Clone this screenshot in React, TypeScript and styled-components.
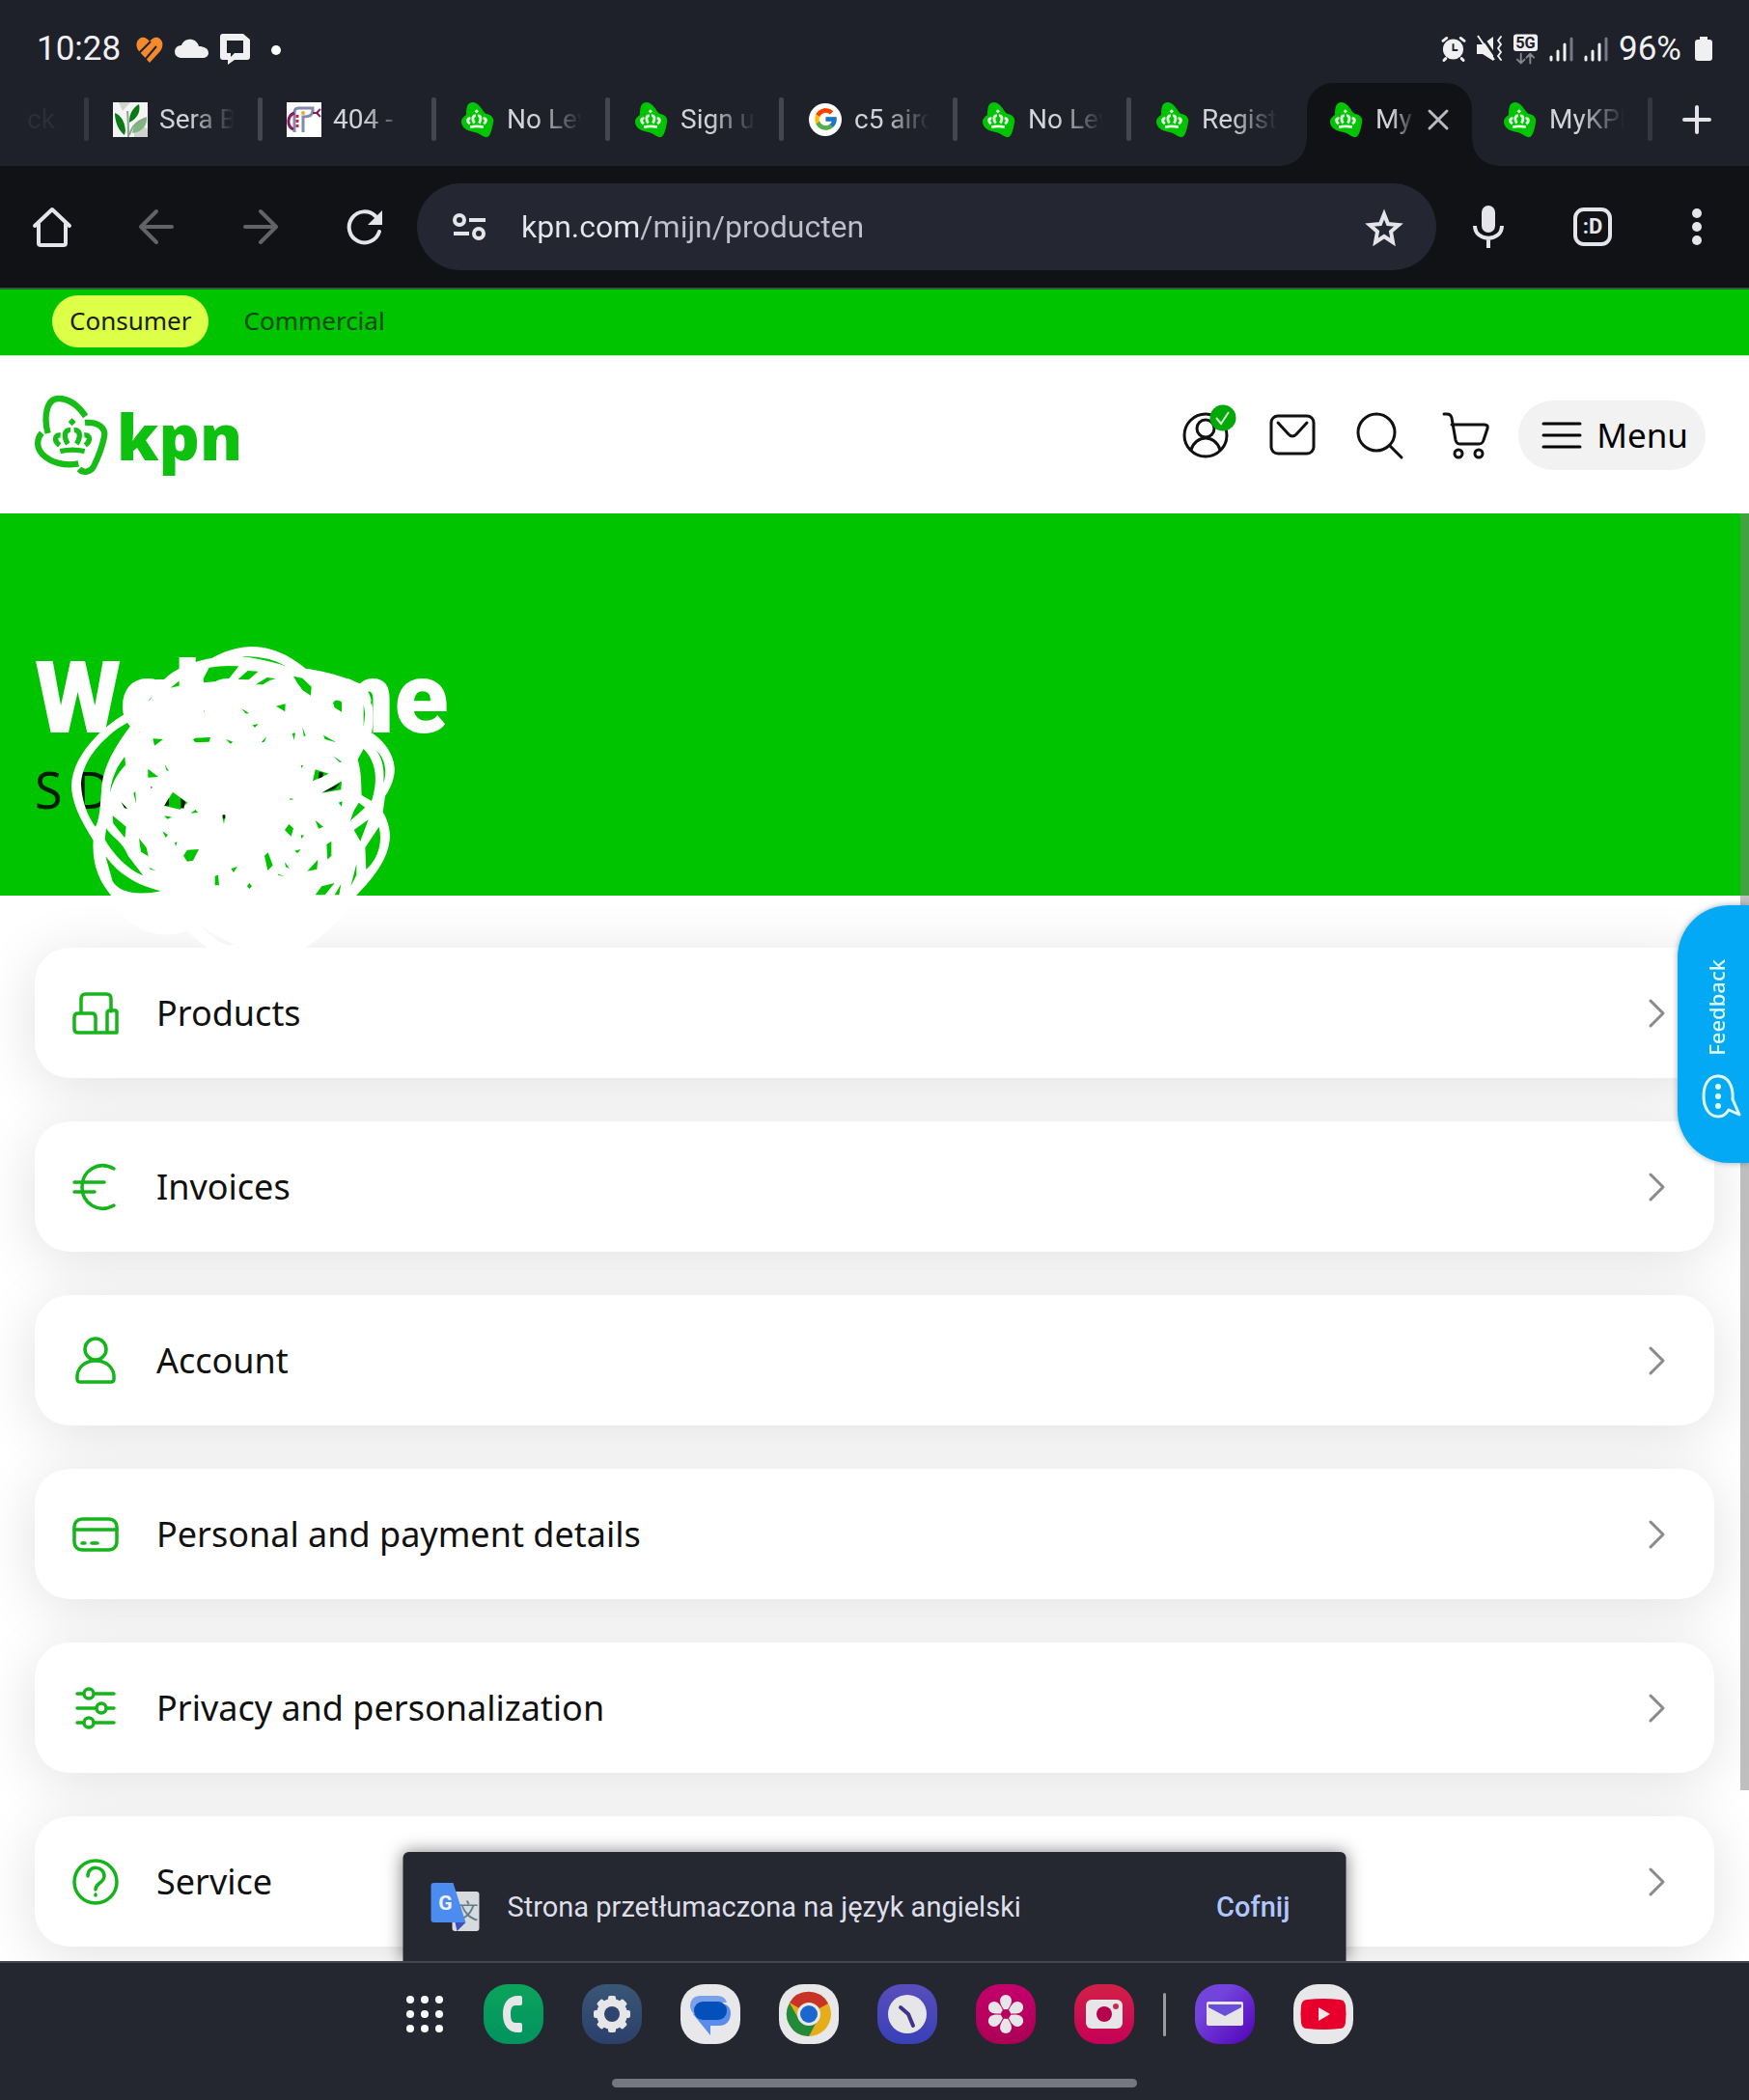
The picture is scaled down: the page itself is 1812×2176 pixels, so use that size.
import React from "react";
import styled, { createGlobalStyle, css } from "styled-components";
import { FcGoogle } from "react-icons/fc";

const GREEN = "#00c400";
const ICON_GREEN = "#14b41a";
const UI_FONT = `Roboto, "Noto Sans", sans-serif`;
const SITE_FONT = `"Noto Sans", "Open Sans", sans-serif`;

const GlobalStyle = createGlobalStyle`
  *, *::before, *::after { box-sizing: border-box; }
  body { margin: 0; background: #fff; }
  button, input { font: inherit; }
`;

const resetButton = css`
  border: 0;
  padding: 0;
  margin: 0;
  background: none;
  color: inherit;
  cursor: pointer;
  display: flex;
  align-items: center;
  justify-content: center;
`;

/* ---------- shell ---------- */

const Screen = styled.div`
  display: flex;
  flex-direction: column;
  height: 100vh;
  overflow: hidden;
  font-family: ${UI_FONT};
`;

const Icon = styled.svg<{ $w: number; $h?: number }>`
  display: block;
  flex: none;
  width: ${(p) => p.$w}px;
  height: ${(p) => p.$h ?? p.$w}px;
  overflow: visible;
`;

const StatusBar = styled.div`
  flex: none;
  height: 86px;
  padding: 15px 38px 0 38px;
  display: flex;
  align-items: center;
  justify-content: space-between;
  background: #1e202a;
  color: #f0f0f2;
  font-size: 35px;
  line-height: 40px;
`;

const StatusGroup = styled.div<{ $gap: number }>`
  display: flex;
  align-items: center;
  gap: ${(p) => p.$gap}px;
`;

const Clock = styled.span`
  margin-right: 4px;
`;

const Battery = styled.span`
  min-width: 97px;
  display: flex;
  align-items: center;
  justify-content: space-between;
  gap: 4px;
`;

/* ---------- tabs ---------- */

const TabStrip = styled.div`
  flex: none;
  height: 86px;
  display: flex;
  background: #1e202a;
  color: #d2d3da;
  font-size: 28px;
  line-height: 36px;
`;

const Divider = styled.span<{ $hidden?: boolean; $dim?: boolean }>`
  flex: none;
  width: 5px;
  height: 45px;
  border-radius: 2px;
  background: ${(p) => (p.$hidden ? "transparent" : p.$dim ? "#343640" : "#44464f")};
`;

const TabItem = styled.div`
  position: relative;
  flex: 0 1 180px;
  min-width: 0;
  padding-bottom: 11px;
  display: flex;
  align-items: center;
`;

const TabShape = styled.span`
  position: absolute;
  inset: 0 2px 0 7px;
  background: #111216;
  border-radius: 27px 27px 0 0;
  &::before,
  &::after {
    content: "";
    position: absolute;
    bottom: 0;
    width: 27px;
    height: 27px;
  }
  &::before {
    right: 100%;
    background: radial-gradient(circle at 0 0, transparent 26px, #111216 27px);
  }
  &::after {
    left: 100%;
    background: radial-gradient(circle at 100% 0, transparent 26px, #111216 27px);
  }
`;

const TabButton = styled.button`
  ${resetButton}
  position: relative;
  flex: 1;
  min-width: 0;
  justify-content: flex-start;
  gap: 12px;
  padding-left: 25px;
`;

const TabTitle = styled.span<{ $fade: number }>`
  flex: none;
  white-space: nowrap;
  text-align: left;
  mask-image: linear-gradient(90deg, #000 ${(p) => Math.round(p.$fade * 0.4)}px, transparent ${(p) => p.$fade}px);
`;

const ClippedTab = styled.span`
  flex: 0 0 87px;
  padding: 20px 0 0 28px;
  color: #2c2e38;
`;

const CloseButton = styled.button`
  ${resetButton}
  position: relative;
  flex: none;
  width: 48px;
  height: 48px;
  margin-right: 13px;
`;

const TabEnd = styled.div`
  display: flex;
  align-items: center;
  padding-bottom: 11px;
`;

const NewTab = styled.button`
  ${resetButton}
  width: 92px;
  height: 60px;
  color: #e3e3e8;
`;

/* ---------- toolbar ---------- */

const Toolbar = styled.div`
  flex: none;
  height: 128px;
  display: flex;
  align-items: center;
  background: #111216;
  border-bottom: 2px solid #2b5a33;
  color: #e4e4ea;
`;

const ToolButton = styled.button<{ $muted?: boolean }>`
  ${resetButton}
  flex: none;
  width: 108px;
  height: 90px;
  color: ${(p) => (p.$muted ? "#626367" : "#e4e4ea")};
`;

const AddressBar = styled.form`
  flex: 1;
  min-width: 0;
  height: 90px;
  display: flex;
  align-items: center;
  padding-left: 37px;
  border-radius: 45px;
  background: #242731;
`;

const AddressInput = styled.input`
  flex: 1;
  min-width: 0;
  height: 60px;
  margin-left: 36px;
  padding: 0;
  border: 0;
  outline: 0;
  font-size: 32px;
  color: transparent;
  background-image: linear-gradient(90deg, #e6e6ee 0 122px, #bfc0cb 122px);
  background-clip: text;
`;

const TabCount = styled.span`
  width: 40px;
  height: 40px;
  display: flex;
  align-items: center;
  justify-content: center;
  border: 4px solid currentColor;
  border-radius: 11px;
  font-size: 22px;
  line-height: 24px;
  font-weight: 700;
`;

const ToolGroup = styled.div`
  flex: none;
  display: flex;
`;

/* ---------- page ---------- */

const Viewport = styled.main`
  position: relative;
  flex: 1;
  min-height: 0;
  overflow: hidden;
  background: #fff;
  font-family: ${SITE_FONT};
  color: #111;
`;

const AudienceBar = styled.nav`
  height: 69px;
  padding: 6px 54px 0;
  display: flex;
  align-items: flex-start;
  gap: 18px;
  background: ${GREEN};
  border-bottom: 1px solid #b9efb9;
`;

const AudienceLink = styled.a<{ $active?: boolean }>`
  height: 54px;
  padding: 0 18px;
  border-radius: 27px;
  background: ${(p) => (p.$active ? "#deff47" : "transparent")};
  color: ${(p) => (p.$active ? "#161e06" : "#054a05")};
  font-size: 26px;
  line-height: 52px;
  text-decoration: none;
`;

const SiteHeader = styled.header`
  height: 163px;
  padding: 0 45px 0 36px;
  display: flex;
  align-items: center;
  justify-content: space-between;
`;

const Brand = styled.a`
  display: flex;
  align-items: center;
  gap: 9px;
  color: #0fc10f;
  font-size: 66px;
  line-height: 68px;
  font-weight: 900;
  text-decoration: none;
`;

const HeaderActions = styled.div`
  display: flex;
  align-items: center;
  gap: 42px;
`;

const HeaderButton = styled.button`
  ${resetButton}
  width: 48px;
  height: 48px;
  color: #111;
`;

const MenuButton = styled.button`
  ${resetButton}
  height: 72px;
  margin-left: -12px;
  padding: 0 18px 0 24px;
  gap: 15px;
  border-radius: 36px;
  background: #f2f2f2;
  color: #000;
  font-size: 35px;
  line-height: 48px;
`;

const Hero = styled.section`
  position: relative;
  height: 396px;
  padding: 128px 36px 0;
  background: ${GREEN};
`;

const Title = styled.h1`
  margin: 0;
  color: #fff;
  font-family: ${UI_FONT};
  font-size: 103px;
  line-height: 128px;
  font-weight: 900;
`;

const Subtitle = styled.p`
  margin: 0;
  color: #001c00;
  font-size: 52px;
  line-height: 60px;
`;

const ScribbleArt = styled.svg`
  position: absolute;
  left: 0;
  top: 108px;
  width: 500px;
  height: 380px;
  z-index: 2;
  pointer-events: none;
`;

const CardList = styled.ul`
  list-style: none;
  margin: 0;
  padding: 54px 36px 45px;
  display: flex;
  flex-direction: column;
  gap: 45px;
`;

const CardLink = styled.a`
  height: 135px;
  padding: 0 52px 0 39px;
  display: flex;
  align-items: center;
  gap: 39px;
  border-radius: 36px;
  background: #fff;
  box-shadow: 0 9px 60px rgba(0, 0, 0, 0.12);
  color: #111;
  font-size: 36px;
  line-height: 48px;
  text-decoration: none;
`;

const CardLabel = styled.span`
  flex: 1;
`;

const ScrollThumb = styled.div`
  position: absolute;
  top: 232px;
  right: 0;
  width: 9px;
  height: 1323px;
  background: rgba(128, 128, 128, 0.5);
`;

const Feedback = styled.button`
  ${resetButton}
  position: absolute;
  top: 638px;
  right: 0;
  width: 74px;
  height: 267px;
  padding: 10px 0 0 25px;
  flex-direction: column;
  align-items: flex-start;
  gap: 20px;
  border-radius: 54px 0 0 54px;
  background: #04a9f5;
  box-shadow: 0 0 6px rgba(0, 60, 90, 0.4);
  color: #e2fbff;
  font-size: 22px;
  line-height: 30px;
  font-weight: 500;
  z-index: 3;
`;

const FeedbackText = styled.span`
  writing-mode: vertical-rl;
  rotate: 180deg;
`;

const Toast = styled.div`
  position: absolute;
  left: 50%;
  bottom: 0;
  translate: -50% 0;
  width: 977px;
  max-width: 100%;
  height: 113px;
  padding: 0 58px 0 29px;
  display: flex;
  align-items: center;
  border-radius: 6px 6px 0 0;
  background: #252731;
  box-shadow: 0 0 18px rgba(0, 0, 0, 0.5);
  color: #dedfe8;
  font-family: ${UI_FONT};
  font-size: 29px;
  line-height: 36px;
  z-index: 4;
`;

const ToastText = styled.span`
  flex: 1;
  margin-left: 29px;
`;

const ToastAction = styled.button`
  ${resetButton}
  color: #b0c6ff;
  font-weight: 500;
`;

/* ---------- dock ---------- */

const Dock = styled.footer`
  flex: none;
  height: 144px;
  padding-top: 22px;
  display: flex;
  flex-direction: column;
  align-items: center;
  gap: 36px;
  background: #242630;
  border-top: 2px solid #44464f;
`;

const DockRow = styled.div`
  display: flex;
  align-items: center;
  gap: 40px;
`;

const AppsButton = styled.button`
  ${resetButton}
  width: 50px;
  height: 62px;
  padding-left: 8px;
`;

const AppButton = styled.button<{ $bg: string }>`
  ${resetButton}
  width: 62px;
  height: 62px;
  border-radius: 25px;
  background: ${(p) => p.$bg};
`;

const DockDivider = styled.span`
  width: 3px;
  height: 45px;
  margin: 0 -10px;
  border-radius: 2px;
  background: #9a9ba3;
`;

const HomeHandle = styled.div`
  width: 30%;
  height: 9px;
  border-radius: 5px;
  background: #74777f;
`;

/* ---------- drawings ---------- */

const Crown = ({ color }: { color: string }) => (
  <g fill="none" stroke={color} strokeWidth="16">
    <path d="M224 430l12 12-12 12-12-12z" fill={color} stroke="none" />
    <path d="M219 467c-20-2-22 22-8 43" />
    <path d="M230 467c20-2 22 22 8 43" />
    <path d="M188 483c-20-2-20 18-3 31" />
    <path d="M262 483c20-2 20 18 3 31" />
    <path d="M187 533q38-9 76 0" />
  </g>
);

const KpnMark = () => (
  <Icon $w={76} $h={82} viewBox="108 360 228 246" aria-hidden="true">
    <g fill="none" stroke="#16bd16" strokeWidth="19">
      <path d="M149 477c-14-50-5-108 33-108 34 0 64 26 84 55" />
      <path d="M264 444c42-4 66 18 60 44-8 40-20 66-33 92-8 18-32 22-45 8" />
      <path d="M130 476c-18 20-16 48 2 66 26 26 68 38 112 29" />
    </g>
    <Crown color="#16bd16" />
  </Icon>
);

const KpnFavicon = () => (
  <Icon $w={36} viewBox="0 0 36 36">
    <path
      fill="#00c400"
      d="M7 4C9-1 15-1 19 3c4 4 5 8 8 9 6 1 8 5 7 9-1 6-3 14-6 15-4 1-8-4-13-5C8 30 1 27 1 20c0-4 4-6 5-7 0-3 0-6 1-9z"
    />
    <g transform="translate(-23.5 -70.2) scale(.18)">
      <Crown color="#e8ffe8" />
    </g>
  </Icon>
);

const LeafFavicon = () => (
  <Icon $w={36} viewBox="0 0 36 36">
    <path fill="#f4f4f4" d="M0 0h36v36H0z" />
    <path fill="#cfd3cf" d="M6 0h12l-8 9zM22 30l8-6 6 4v8H22z" />
    <path fill="#0b7a16" d="M2 11c7 3 10 9 11 18l-1 5C6 29 2 21 2 11zM27 2c2 8-2 15-10 19 0-9 3-15 10-19z" />
    <path fill="#7fb87f" d="M35 15c1 9-5 16-15 17 1-8 6-14 15-17z" />
    <path fill="none" stroke="#8aa68a" strokeWidth="2" d="M16 36c0-12 0-18-1-27M17 34c3-10 8-14 16-17" />
  </Icon>
);

const PipeFavicon = () => (
  <Icon $w={36} viewBox="0 0 36 36">
    <path fill="#fff" d="M0 0h36v36H0z" />
    <path fill="none" stroke="#7d8cab" strokeWidth="3" d="M8 31V11q0-5 4-5h15v3q0 6-10 6v16" />
    <path fill="none" stroke="#8b1a5c" strokeWidth="3" d="M8 11C0 14 0 25 7 28" />
    <path fill="none" stroke="#8b1a5c" strokeWidth="2" d="M27 11h6M35 7l-4 4 4 4" />
    <path stroke="#d3204f" strokeWidth="3" strokeDasharray="3 2" d="M11 13v13" />
    <circle cx="17" cy="11" r="2" fill="#f5a623" />
  </Icon>
);

const GoogleDisc = styled.span`
  flex: none;
  width: 34px;
  height: 34px;
  margin: 1px;
  display: flex;
  align-items: center;
  justify-content: center;
  border-radius: 50%;
  background: #fff;
`;

const GoogleFavicon = () => (
  <GoogleDisc>
    <FcGoogle size={27} />
  </GoogleDisc>
);

const Signal = () => (
  <Icon $w={25} $h={26} viewBox="0 0 25 26">
    <path stroke="#f0f0f2" strokeWidth="3" strokeLinecap="round" d="M2 21v3M9 15v9M16 8v16" />
    <path stroke="#777983" strokeWidth="3" strokeLinecap="round" d="M23 2v22" />
  </Icon>
);

const line = (width = 3) => ({
  fill: "none",
  stroke: "currentColor",
  strokeWidth: width,
  strokeLinecap: "round" as const,
  strokeLinejoin: "round" as const,
});

const Chevron = () => (
  <Icon $w={16} $h={30} viewBox="0 0 16 30" color="#8a8a8a">
    <path {...line(3)} d="M2 2l13 13L2 28" />
  </Icon>
);

const Scribble = () => (
  <ScribbleArt viewBox="0 0 1500 1140" aria-hidden="true">
    <mask id="scribble-mask" maskUnits="userSpaceOnUse" x="0" y="0" width="1500" height="1140">
      <path
        fill="#fff"
        d="M400 292C300 350 222 440 222 525c3 65 43 125 68 167-5 78 20 128 55 171 25 47 65 122 175 122 28 0 45-6 62-12 20 20 38 38 60 52h308c100-65 140-135 158-162 62-63 104-123 104-188-2-35-17-65-22-70l7-50c23-35 31-65 29-90-4-45-36-85-71-107 5-18 15-108-25-148-40-20-120-45-180-52-70-58-130-68-170-68-60 2-100 25-120 35-60 10-120 35-150 67-70-2-115 28-115 98z"
      />
      <g fill="#000">
        <path d="M405 322C330 360 253 440 252 520c3 60 28 110 45 130 15-30 15-80 18-110 3-70 35-130 95-210z" />
        <path d="M330 655c20 30 50 40 68 85l47 62c-55-22-95-72-119-112zM350 615l42 35-4 35-36-45z" />
        <path d="M388 432l2 26c-25 27-40 52-48 87 3-45 23-85 46-113zM328 742c42 55 92 88 172 108-70 15-130 5-150-30z" />
        <path d="M632 190l18-35q45-8 92-4l-37 47q-40 0-72 4zM740 192l30-27 33 2-30 26zM795 208l35-22 28 4-33 18zM750 120q80-3 142 32-60-20-142-32z" />
        <path d="M912 182l28 6 28 27-2 27-31-20zM530 218l35-28 1 20zM633 288l15-6 2 28 14 24-24-22zM750 282l25 16-10 2zM858 275l29-7-1 24zM475 376l32 2-27 20z" />
        <path d="M606 374l48-2-4 14-42 2-8-8zM702 378l22 8-8 6zM785 334l18-4-11 12zM812 388l16-18-6 16zM908 360l10-2-4 22zM1035 265q8-15 27-3v31l-22-13zM1005 365l40 23-35-10zM1035 430l27 18-6 2zM940 340l10 28-6 0z" />
        <path d="M1130 408l-18 32c13 50 10 80 12 112l31 18c20-60 17-120-25-162zM1168 410c32 30 35 70 24 105 3-45-2-75-24-105zM1115 575l20 15-47 42 12-32zM1100 660l45-32-25 67z" />
        <path d="M1178 650c12 50-3 100-40 133l-3-68zM1130 270l5 30-5 40zM1150 250l8 22-5-4zM1015 705l15-10v45l-12 12zM955 788l33-36-3 30zM885 660l13-18 14 13-7 25zM980 630l25 20-15 6z" />
        <path d="M822 740l11-10 15 40-16 16zM885 760l15 20-12-5zM915 725l20-5-10 12zM570 740l12-18 36-2-18 35-18 3zM432 686l23 29 6 27-23-14zM505 664l17 11-7 9zM592 608l16-11 7 9zM510 616l25 4-15 6z" />
        <path d="M460 470l32 25-32 2zM512 456l13 22-8-4zM537 542l46 33-23 21-50-11zM980 472l42 13-50 23zM1062 508l-2 27-60 10zM668 803l10-3 3 32h-13zM718 780l20-6-12 18zM768 835l7-10 8 10-8 8z" />
        <path d="M980 862l20-27 40-10-30 37zM1040 862l20-34-6 34zM1090 835l18-70v35zM690 615h10l-4 27zM460 260l14-18-8 14zM415 545l6-4 2 38zM375 572l22 22-8-2zM935 460l8-2-6 10zM900 562l14 2-12 3zM1052 575l12-4-2 16zM935 675l10 2-8 10zM862 796l22 8-18-3zM462 776l22 10-16-3zM543 700l8-3-5 14zM430 350l8-3-5 10zM612 945q52 46 116 70l-20 4q-60-24-96-74z" />
      </g>
    </mask>
    <rect width="1500" height="1140" fill="#fff" mask="url(#scribble-mask)" />
    <path
      fill="#001c00"
      d="M525 560v24l-14 1zM562 562l14 10-5 21-9-2zM992 480l13 2-2 13-13 5zM1002 543l56-30-18 20zM692 613h8v12h-6zM377 574l18 19-8-1zM468 526l6 1-4 4z"
    />
  </ScribbleArt>
);

/* ---------- data ---------- */

type TabInfo = { title: string; icon: React.ReactNode; active?: boolean; noDivider?: boolean };

const tabs: TabInfo[] = [
  { title: "Sera B", icon: <LeafFavicon /> },
  { title: "404 -", icon: <PipeFavicon /> },
  { title: "No Lev", icon: <KpnFavicon /> },
  { title: "Sign up", icon: <KpnFavicon /> },
  { title: "c5 airc", icon: <GoogleFavicon /> },
  { title: "No Lev", icon: <KpnFavicon /> },
  { title: "Regist", icon: <KpnFavicon /> },
  { title: "My", icon: <KpnFavicon />, active: true, noDivider: true },
  { title: "MyKPN", icon: <KpnFavicon />, noDivider: true },
];

const cards: { label: string; art: React.ReactNode }[] = [
  {
    label: "Products",
    art: <path d="M9 22V9q0-5 5-5h21q5 0 5 5v13M2 28q0-4 4-4h14q4 0 4 4v16H6q-4 0-4-4zM24 44h22V23q0-2-2-2h-5q-3 0-3 3v20" />,
  },
  {
    label: "Invoices",
    art: <path d="M43 5C27-4 10 7 10 24s17 28 33 19M2 19h31M2 29h21" />,
  },
  {
    label: "Account",
    art: (
      <>
        <circle cx="24" cy="12" r="11" />
        <path d="M5 43c-1-11 7-19 19-19s20 8 19 19q0 3-3 3H8q-3 0-3-3z" />
      </>
    ),
  },
  {
    label: "Personal and payment details",
    art: (
      <>
        <rect x="2" y="8" width="44" height="32" rx="8" />
        <path d="M2 19h44M10 33h3M20 33h6" />
      </>
    ),
  },
  {
    label: "Privacy and personalization",
    art: (
      <>
        <path d="M5 9h6M23 9h20M5 24h19M36 24h7M5 39h6M23 39h20" />
        <circle cx="17" cy="9" r="5" />
        <circle cx="30" cy="24" r="5" />
        <circle cx="17" cy="39" r="5" />
      </>
    ),
  },
  {
    label: "Service",
    art: (
      <>
        <circle cx="24" cy="24" r="22" />
        <path d="M16 18c0-12 17-11 17 0 0 7-9 7-9 14M24 37v1" />
      </>
    ),
  },
];

const INK = "#e6e6e8";

const apps: { name: string; bg: string; art: React.ReactNode; split?: boolean }[] = [
  {
    name: "Phone",
    bg: "linear-gradient(#0ca35c, #00935f)",
    art: (
      <path
        fill={INK}
        d="M38 12c-12-1-18 7-18 19s6 20 18 19q2 0 2-2v-6q0-2-2-2h-5c-4 0-5-4-5-9s1-9 5-9h5q2 0 2-2v-6q0-2-2-2z"
      />
    ),
  },
  {
    name: "Settings",
    bg: "linear-gradient(#3a5675, #2b3f6b)",
    art: (
      <>
        <circle cx="31" cy="31" r="16" fill={INK} />
        {[0, 45, 90, 135].map((a) => (
          <rect key={a} x="27" y="12" width="8" height="38" rx="2" fill={INK} transform={`rotate(${a} 31 31)`} />
        ))}
        <circle cx="31" cy="31" r="8" fill="#2f456f" />
      </>
    ),
  },
  {
    name: "Messages",
    bg: "#e8e8ea",
    art: (
      <>
        <path fill="#5a8cec" d="M13 31l18 22V43h9c8 0 12-6 12-13q0-6-5-9z" />
        <path fill="#7ba0ea" d="M20 12h18q8 0 10 7H24q-9 1-10 12-4-4-4-9 1-10 10-10z" />
        <rect x="14" y="18" width="34" height="19" rx="9" fill="#0350bb" />
      </>
    ),
  },
  {
    name: "Chrome",
    bg: "#e8e8ea",
    art: (
      <>
        <circle cx="31" cy="31" r="23" fill="#e5ad17" />
        <path fill="#c93227" d="M31 31L11 19a23 23 0 0 1 40 1z" />
        <path fill="#23893b" d="M31 54A23 23 0 0 1 11 19.500L21 37q3 5 10 5l8-3z" />
        <circle cx="31" cy="31" r="12" fill="#e8e8ea" />
        <circle cx="31" cy="31" r="9" fill="#1a67cf" />
      </>
    ),
  },
  {
    name: "Clock",
    bg: "linear-gradient(#5a4dbb, #3840b8)",
    art: (
      <>
        <circle cx="31" cy="31" r="20" fill={INK} />
        <path d="M24 24l8 7 5 12" fill="none" stroke="#42338a" strokeWidth="4" strokeLinecap="round" strokeLinejoin="round" />
      </>
    ),
  },
  {
    name: "Gallery",
    bg: "linear-gradient(#c4006c, #ac0055)",
    art: (
      <>
        {[0, 60, 120, 180, 240, 300].map((a) => (
          <path
            key={a}
            fill={INK}
            d="M31 29c-3-4-6-8-6-12a6 6 0 0 1 12 0c0 4-3 8-6 12z"
            transform={`rotate(${a} 31 31)`}
          />
        ))}
        <circle cx="31" cy="31" r="5" fill="#b7005f" />
      </>
    ),
  },
  {
    name: "Camera",
    bg: "linear-gradient(#d12146, #c50058)",
    art: (
      <>
        <rect x="12" y="16" width="38" height="30" rx="6" fill={INK} />
        <circle cx="31" cy="31" r="8" fill="#b7004c" />
        <circle cx="43" cy="23" r="3" fill="#c92c4a" />
      </>
    ),
  },
  {
    name: "Email",
    bg: "linear-gradient(135deg, #7344dc 30%, #5200b6)",
    split: true,
    art: (
      <>
        <rect x="12" y="18" width="38" height="25" rx="2" fill={INK} />
        <path fill="#6a4ddb" d="M14 21h34v3L31 33 14 24z" />
      </>
    ),
  },
  {
    name: "YouTube",
    bg: "#e8e8ea",
    art: (
      <>
        <path fill="#e8002d" d="M14 16q17-2 34 0 5 0 6 6 1 9 0 18-1 6-6 6-17 2-34 0-5 0-6-6-1-9 0-18 1-6 6-6z" />
        <path fill="#f5e6ea" d="M26 24l12 7-12 7z" />
      </>
    ),
  },
];

/* ---------- sections ---------- */

const Status = () => (
  <StatusBar>
    <StatusGroup $gap={12}>
      <Clock>10:28</Clock>
      <Icon $w={28} $h={28} viewBox="0 0 28 28">
        <path fill="#f58a2c" d="M14 28L3 16C-3 8 3 0 9 2c3 1 4 3 5 4 1-1 2-3 5-4 6-2 12 6 6 14z" />
        <path stroke="#1e202a" strokeWidth="2" fill="none" d="M2 19L15 6M9 25L21 11" />
      </Icon>
      <Icon $w={35} $h={24} viewBox="0 0 35 24">
        <path fill="#f0f0f2" d="M6 21a6 6 0 0 1 1-13C10-1 23 0 25 9c5 0 10 2 10 7 0 3-3 5-6 5z" />
      </Icon>
      <Icon $w={31} $h={31} viewBox="0 0 31 31">
        <path
          fill="#f0f0f2"
          fillRule="evenodd"
          d="M3 0h21l7 6v18q0 3-3 3H15l-7 5v-5H3q-3 0-3-3V3q0-3 3-3zM7 7v13h4v4l4-4h9V7z"
        />
      </Icon>
      <Icon $w={32} $h={10} viewBox="0 0 32 10">
        <circle cx="15" cy="6" r="5" fill="#fff" />
      </Icon>
    </StatusGroup>
    <StatusGroup $gap={11}>
      <Icon $w={26} $h={27} viewBox="0 0 27 27">
        <path stroke="#f0f0f2" strokeWidth="3" strokeLinecap="round" d="M2 5l4-3M21 2l4 3M5 24l-2 2M22 24l2 2" />
        <circle cx="13" cy="14" r="11" fill="#f0f0f2" />
        <path stroke="#1e202a" strokeWidth="2" fill="none" d="M13 8v7h5" />
      </Icon>
      <Icon $w={27} $h={27} viewBox="0 0 27 27">
        <path fill="#f0f0f2" d="M0 9h6l11-8v25L6 19H0z" />
        <path stroke="#1e202a" strokeWidth="3" d="M4-1l18 26" />
        <path stroke="#f0f0f2" strokeWidth="2" d="M1 0l17 25" />
        <path {...line(2)} d="M25 1l-3 4 3 4-3 4 3 4-3 4 3 4" />
      </Icon>
      <Icon $w={26} $h={33} viewBox="0 0 27 33">
        <rect y="1" width="26" height="18" rx="3" fill="#f0f0f2" />
        <text x="13" y="16" textAnchor="middle" fontSize="17" fontWeight="700" fill="#1e202a">
          5G
        </text>
        <path {...line(2)} stroke="#85868e" d="M8 22v10M4 28l4 4 4-4M18 32V22M14 26l4-4 4 4" />
      </Icon>
      <Signal />
      <Signal />
      <Battery>
        96%
        <Icon $w={18} $h={25} viewBox="0 0 18 25">
          <path fill="#f0f0f2" d="M5 0h8v3h2q3 0 3 3v16q0 3-3 3H3q-3 0-3-3V6q0-3 3-3h2z" />
        </Icon>
      </Battery>
    </StatusGroup>
  </StatusBar>
);

const Tabs = () => (
  <TabStrip>
    <ClippedTab>ck</ClippedTab>
    {tabs.map((t, i) => (
      <TabItem key={i}>
        {t.active && <TabShape />}
        <Divider $hidden={t.noDivider} $dim={i === 0} />
        <TabButton type="button">
          {t.icon}
          <TabTitle $fade={t.active ? 42 : 78}>{t.title}</TabTitle>
        </TabButton>
        {t.active && (
          <CloseButton type="button" aria-label="Close tab">
            <Icon $w={22} viewBox="0 0 22 22" color="#b9bac2">
              <path {...line(3)} d="M2 2l18 18M20 2L2 20" />
            </Icon>
          </CloseButton>
        )}
      </TabItem>
    ))}
    <TabEnd>
      <Divider $dim />
      <NewTab type="button" aria-label="New tab">
        <Icon $w={30} viewBox="0 0 30 30">
          <path {...line(4)} d="M15 2v26M2 15h26" />
        </Icon>
      </NewTab>
    </TabEnd>
  </TabStrip>
);

const BrowserToolbar = () => (
  <Toolbar>
    <ToolGroup>
      <ToolButton type="button" aria-label="Home">
        <Icon $w={40} $h={42} viewBox="0 0 40 42">
          <path {...line(4)} d="M2 20L20 3l18 17M6 18v20q0 2 2 2h24q2 0 2-2V18" />
        </Icon>
      </ToolButton>
      <ToolButton type="button" aria-label="Back" $muted>
        <Icon $w={36} viewBox="0 0 36 36">
          <path {...line(4)} d="M34 18H2M18 2L2 18l16 16" />
        </Icon>
      </ToolButton>
      <ToolButton type="button" aria-label="Forward" $muted>
        <Icon $w={36} viewBox="0 0 36 36">
          <path {...line(4)} d="M2 18h32M18 2l16 16-16 16" />
        </Icon>
      </ToolButton>
      <ToolButton type="button" aria-label="Reload">
        <Icon $w={36} viewBox="0 0 36 36">
          <path {...line(4)} d="M33 23A16 16 0 1 1 29 7" />
          <path fill="currentColor" d="M36 1v15H21z" />
        </Icon>
      </ToolButton>
    </ToolGroup>
    <AddressBar onSubmit={(e) => e.preventDefault()}>
      <Icon $w={35} $h={28} viewBox="0 0 35 28">
        <g {...line(4)} strokeLinecap="butt">
          <circle cx="7" cy="7" r="5" />
          <circle cx="27" cy="21" r="5" />
          <path d="M17 7h17M1 21h16" />
        </g>
      </Icon>
      <AddressInput aria-label="Address" defaultValue="kpn.com/mijn/producten" />
      <ToolButton type="button" aria-label="Bookmark">
        <Icon $w={38} $h={37} viewBox="0 0 38 37">
          <path
            fill="none"
            stroke="currentColor"
            strokeWidth="4"
            d="M19 5l4 10 11 1-8 7 2 11-9-6-9 6 2-11-8-7 11-1z"
          />
        </Icon>
      </ToolButton>
    </AddressBar>
    <ToolGroup>
      <ToolButton type="button" aria-label="Voice search">
        <Icon $w={32} $h={44} viewBox="0 0 32 44">
          <rect x="9" y="0" width="14" height="28" rx="7" fill="currentColor" />
          <path {...line(4)} strokeLinecap="butt" d="M2 21c0 17 28 17 28 0M16 34v10" />
        </Icon>
      </ToolButton>
      <ToolButton type="button" aria-label="Open tabs">
        <TabCount>:D</TabCount>
      </ToolButton>
      <ToolButton type="button" aria-label="More">
        <Icon $w={10} $h={38} viewBox="0 0 10 38">
          <g fill="currentColor">
            <circle cx="5" cy="5" r="5" />
            <circle cx="5" cy="19" r="5" />
            <circle cx="5" cy="33" r="5" />
          </g>
        </Icon>
      </ToolButton>
    </ToolGroup>
  </Toolbar>
);

const Header = () => (
  <SiteHeader>
    <Brand href="#" aria-label="kpn">
      <KpnMark />
      kpn
    </Brand>
    <HeaderActions>
      <HeaderButton type="button" aria-label="My account">
        <Icon $w={48} viewBox="0 0 48 48">
          <g {...line(3)}>
            <circle cx="24" cy="24" r="22" />
            <circle cx="24" cy="17" r="9" />
            <path d="M9 39c5-16 25-16 30 0" />
          </g>
          <circle cx="42" cy="6" r="13.500" fill="#00a80a" />
          <path d="M35 6l5 6 8-12" fill="none" stroke="#d6f5c8" strokeWidth="2" />
        </Icon>
      </HeaderButton>
      <HeaderButton type="button" aria-label="Mail">
        <Icon $w={48} viewBox="0 0 48 48">
          <g {...line(3)}>
            <rect x="2" y="4" width="44" height="39" rx="7" />
            <path d="M9 11l11 12q4 4 8 0l11-12" />
          </g>
        </Icon>
      </HeaderButton>
      <HeaderButton type="button" aria-label="Search">
        <Icon $w={48} viewBox="0 0 48 48">
          <g {...line(3)}>
            <circle cx="21" cy="21" r="19" />
            <path d="M35 35l12 12" />
          </g>
        </Icon>
      </HeaderButton>
      <HeaderButton type="button" aria-label="Shopping cart">
        <Icon $w={48} viewBox="0 0 48 48">
          <g {...line(3)}>
            <path d="M1 2h3q4 0 5 4l4 23q1 4 4 4h20q4 0 5-4l4-12q1-4-3-4H9" />
            <circle cx="16" cy="43" r="4" />
            <circle cx="37" cy="43" r="4" />
          </g>
        </Icon>
      </HeaderButton>
      <MenuButton type="button">
        <Icon $w={42} $h={30} viewBox="0 0 42 30">
          <path {...line(3)} d="M2 3h38M2 15h38M2 27h38" />
        </Icon>
        Menu
      </MenuButton>
    </HeaderActions>
  </SiteHeader>
);

const TranslateToast = () => (
  <Toast role="status">
    <Icon $w={50} viewBox="0 0 50 50">
      <rect x="22" y="9" width="28" height="41" rx="3" fill="#d9dadd" />
      <text x="38" y="37" textAnchor="middle" fontSize="22" fontFamily="'Noto Sans CJK SC', sans-serif" fill="#5d7c84">
        文
      </text>
      <path fill="#3d4fb8" d="M27 50l9-9H25z" />
      <path fill="#4c8bf0" d="M3 0h20l13 41H3q-3 0-3-3V3q0-3 3-3z" />
      <text x="15" y="28" textAnchor="middle" fontSize="21" fontWeight="700" fill="#eef3fd">
        G
      </text>
    </Icon>
    <ToastText>Strona przetłumaczona na język angielski</ToastText>
    <ToastAction type="button">Cofnij</ToastAction>
  </Toast>
);

export default function App() {
  return (
    <Screen>
      <GlobalStyle />
      <Status />
      <Tabs />
      <BrowserToolbar />
      <Viewport>
        <AudienceBar>
          <AudienceLink href="#" $active>
            Consumer
          </AudienceLink>
          <AudienceLink href="#">Commercial</AudienceLink>
        </AudienceBar>
        <Header />
        <Hero>
          <Title>Welcome</Title>
          <Subtitle>S D</Subtitle>
          <Scribble />
        </Hero>
        <CardList>
          {cards.map((c) => (
            <li key={c.label}>
              <CardLink href="#">
                <Icon $w={48} viewBox="0 0 48 48" color={ICON_GREEN}>
                  <g {...line(3.5)}>{c.art}</g>
                </Icon>
                <CardLabel>{c.label}</CardLabel>
                <Chevron />
              </CardLink>
            </li>
          ))}
        </CardList>
        <ScrollThumb />
        <Feedback type="button">
          <FeedbackText>Feedback</FeedbackText>
          <Icon $w={40} $h={46} viewBox="0 0 40 46">
            <path {...line(3)} d="M32 26c1-14-5-24-15-24S2 11 2 23s6 21 15 21c5 0 8-2 11-7l11 5z" />
            <g fill="currentColor">
              <circle cx="17" cy="13" r="3" />
              <circle cx="17" cy="23" r="3" />
              <circle cx="17" cy="33" r="3" />
            </g>
          </Icon>
        </Feedback>
        <TranslateToast />
      </Viewport>
      <Dock>
        <DockRow>
          <AppsButton type="button" aria-label="All apps">
            <Icon $w={36} viewBox="0 0 36 36">
              {[3, 18, 33].map((y) =>
                [3, 18, 33].map((x) => <circle key={`${x}-${y}`} cx={x} cy={y} r="4" fill="#fff" />)
              )}
            </Icon>
          </AppsButton>
          {apps.map((a) => (
            <React.Fragment key={a.name}>
              {a.split && <DockDivider />}
              <AppButton type="button" aria-label={a.name} $bg={a.bg}>
                <Icon $w={62} viewBox="0 0 62 62">
                  {a.art}
                </Icon>
              </AppButton>
            </React.Fragment>
          ))}
        </DockRow>
        <HomeHandle />
      </Dock>
    </Screen>
  );
}
